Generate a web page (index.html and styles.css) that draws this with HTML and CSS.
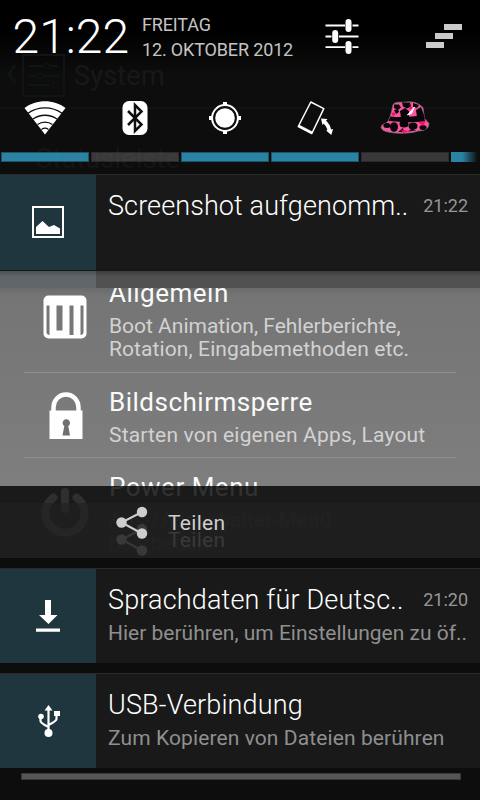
FILE: index.html
```html
<!DOCTYPE html>
<html lang="de">
<head>
<meta charset="utf-8">
<title>Benachrichtigungen</title>
<link rel="stylesheet" href="styles.css">
</head>
<body>
<main class="shade">
  <div class="ghost ghost-header">
    <svg width="66" height="44" viewBox="0 0 66 44" fill="none" stroke="currentColor"><path d="M15 11 9 20l6 9" stroke-width="3"/><path d="M23 1h41v41H23zM29 12h14m7 0h8M29 22h7m7 0h15M29 31h20" stroke-width="2"/><circle cx="47" cy="12" r="3"/><circle cx="40" cy="22" r="3"/><circle cx="55" cy="31" r="3"/></svg>
    <span class="ghost-title">System</span>
  </div>
  <span class="ghost ghost-status">Statusleiste</span>
  <i class="ghost-line"></i>
  <header class="top">
    <div class="clock">21:22</div>
    <div class="date"><div class="day">FREITAG</div><div class="full">12. OKTOBER 2012</div></div>
    <svg class="sliders" width="36" height="36" viewBox="0 0 36 36"><g stroke="#fff" stroke-width="1.8"><path d="M1.5 7.500H21M28.500 7.500h6M1.500 18.500h6M15 18.500h19.500M1.500 29.200H21M28.500 29.200h6"/></g><g fill="#fff"><rect x="21.500" y="1" width="6" height="13" rx="3"/><rect x="8.200" y="12" width="6" height="13" rx="3"/><rect x="21.500" y="23" width="6" height="13" rx="3"/></g></svg>
    <svg class="clear" width="36" height="24" viewBox="0 0 36 24" fill="#cacaca"><path d="M18 0h18v6H18zM9 9h18v6H9zM0 18h18v6H0z"/></svg>
  </header>
  <nav class="toggles">
    <div class="toggle on"><svg viewBox="0 0 48 40"><path d="M3.500 8C15-1 33-1 44.500 8L24 34.500z" fill="#fff"/><path d="M7 13.200c10-7.200 24-7.200 34 0M12 19c7-5 17-5 24 0M16.500 24.500c4.500-3.200 10.500-3.200 15 0M20.500 29.500c2-1.500 5-1.500 7 0" fill="none" stroke="#0d0d0d" stroke-width="1.300"/></svg></div>
    <div class="toggle"><svg viewBox="0 0 48 40"><rect x="11.500" y="1" width="25" height="34" rx="6.500" fill="#fff"/><path d="M17 11l13.500 13.500L24 31V5l6.500 6.500L17 25" fill="none" stroke="#101010" stroke-width="2.500"/></svg></div>
    <div class="toggle on"><svg viewBox="0 0 48 40"><circle cx="24" cy="18" r="9.800" fill="#fff"/><circle cx="24" cy="18" r="12.900" fill="none" stroke="#fff" stroke-width="2"/><path d="M22 2h4v4h-4zM22 30h4v4h-4zM8 16h4v4H8zM36 16h4v4h-4z" fill="#fff"/></svg></div>
    <div class="toggle on"><svg viewBox="0 0 48 40"><g transform="translate(6.300 0)"><path d="M13.500 2 26.500 8.700 14.500 33.500 1 26.500z" fill="none" stroke="#fff" stroke-width="1.500" stroke-linejoin="round"/><path d="M1 26.500 14.500 33.500l.8-1.500L1.800 25z" fill="#fff" stroke="#fff" stroke-width=".6"/></g><path d="M33 21.500Q37.500 25 38.500 31" fill="none" stroke="#fff" stroke-width="3.800"/><path d="M30 18.500l6.500.5-5 6zM40.300 35l-5.200-4.600 7-1.400z" fill="#fff"/></svg></div>
    <div class="toggle"><svg viewBox="0 0 48 40"><path d="M12 5Q13 1.500 22 2.300 35 0 42 7.500L43.500 18.500 48 23.500Q48 31 37 31 29 34 14 33 1 32 0 27.500 0 24.500 6 22.500 9 20 12 5z" fill="#f8579f" stroke="#777" stroke-width=".7"/><g fill="#090509"><path d="M9.500 16.500Q25 18 43 15l1 6.500Q25 23 7.500 21z"/><path d="M13 4.500h5l2 3-3 2.500-4-2zM21 2.500h8l1 4-4 2-4-2zM32 3l6 2-2 3-4-1zM13 10l4-1 1 3-3 2zM19 11l5-3 4 3v6l-8 1zM35 10l5-3 3 8-7 2z"/><ellipse cx="6" cy="25.500" rx="3.600" ry="2.500"/><ellipse cx="13" cy="27" rx="4" ry="4.800"/><ellipse cx="23" cy="24" rx="4.500" ry="3.500"/><ellipse cx="32" cy="26" rx="4.500" ry="3.500"/><ellipse cx="42" cy="27.500" rx="3.500" ry="2.500"/><path d="M17 32l5-4 1 4zM27 31.500l8-1-4-2z"/></g><g fill="#ff0874"><circle cx="12.500" cy="14" r="1.700"/><circle cx="29.500" cy="8" r="1.500"/><path d="M37 22l8-1-3 5zM20 30l9 1-7 2z"/></g><path d="M33.500 7 26.500 15l4-1.500z" fill="#fff" stroke="#fff"/></svg></div>
    <div class="toggle on partial"></div>
  </nav>

  <section class="card first">
    <div class="icon"><svg width="32" height="32" viewBox="0 0 32 32"><path d="M1 1h30v30H1z" fill="none" stroke="#fff" stroke-width="2"/><path d="M4 28v-7l6.500-6 6.500 6 5-2 6 3.500V28z" fill="#fff"/></svg></div>
    <div class="content"><div class="row"><div class="title t1">Screenshot aufgenomm..</div><time>21:22</time></div></div>
  </section>
  <div class="strip"><i></i></div>
  <section class="preview">
    <article class="setting general">
      <svg width="44" height="44" viewBox="0 0 44 44"><rect x=".5" y=".5" width="43" height="43" rx="5" fill="#fff"/><path d="M3.500 10.500h3V40q-3-.5-3-3zM13.500 10.500h6v25h-6zM26.500 10.500h4V40h-4zM37.500 10.500h3V37q0 2.500-3 3z" fill="#777"/></svg>
      <div><h2 class="h1">Allgemein</h2><p class="p1">Boot Animation, Fehlerberichte,</p><p class="p2">Rotation, Eingabemethoden etc.</p></div>
    </article>
    <article class="setting lock">
      <svg width="44" height="48" viewBox="0 0 44 48"><path d="M9.500 21V15.500a12.500 13 0 0 1 25 0V21" fill="none" stroke="#fff" stroke-width="4.500"/><path d="M5.500 18.500h33V47h-33z" fill="#fff"/><path d="M18.500 43.500l1.800-9.500a3.700 3.700 0 1 1 4 0l1.700 9.500z" fill="#707070"/></svg>
      <div><h2 class="h2">Bildschirmsperre</h2><p class="p3">Starten von eigenen Apps, Layout</p></div>
    </article>
    <article class="setting power">
      <svg width="48" height="50" viewBox="0 0 48 50" fill="none" stroke="#e6e6e6" stroke-width="8" stroke-linecap="round"><path d="M12.500 10.500a19.500 19.500 0 1 0 23 0M24 5v17"/></svg>
      <div><h2 class="h3">Power Menu</h2><p class="p4">Aus-/Ausschalter-Menü</p><p>bearbeiten</p></div>
    </article>
  </section>
  <section class="share">
    <svg width="32" height="33" viewBox="0 0 32 33"><path d="M26 6 5.500 16.500 26 27.500" fill="none" stroke="currentColor" stroke-width="2"/><g fill="currentColor"><circle cx="26" cy="6" r="5.200"/><circle cx="5.500" cy="16.500" r="5.200"/><circle cx="26" cy="27.500" r="5.200"/></g></svg>
    <span>Teilen</span>
    <div class="share-echo"><svg width="32" height="33" viewBox="0 0 32 33"><path d="M26 6 5.500 16.500 26 27.500" fill="none" stroke="currentColor" stroke-width="2"/><g fill="currentColor"><circle cx="26" cy="6" r="5.200"/><circle cx="5.500" cy="16.500" r="5.200"/><circle cx="26" cy="27.500" r="5.200"/></g></svg><span>Teilen</span></div>
  </section>

  <section class="card">
    <div class="icon"><svg width="32" height="32" viewBox="0 0 32 32" fill="#fff"><path d="M13 0h6v15h6.500l-9 9-9.500-9h6zM4 28.500h24v3.300H4z"/></svg></div>
    <div class="content"><div class="row"><div class="title t2">Sprachdaten für Deutsc..</div><time>21:20</time></div><div class="sub s2">Hier berühren, um Einstellungen zu öf..</div></div>
  </section>
  <section class="card">
    <div class="icon"><svg width="32" height="32" viewBox="0 0 32 32"><path d="M16.500 4v22M8.500 12v4q0 2 8 6M24.500 9v5q0 2-8 6" fill="none" stroke="#fff" stroke-width="2.200"/><g fill="#fff"><path d="M16.500 0l4 5.500h-8zM22 6h6v5h-6z"/><circle cx="9" cy="11.500" r="2.800"/><circle cx="16.500" cy="28" r="4"/></g></svg></div>
    <div class="content"><div class="row"><div class="title t3">USB-Verbindung</div></div><div class="sub s3">Zum Kopieren von Dateien berühren</div></div>
  </section>
  <footer><i></i></footer>
</main>
</body>
</html>
```
FILE: styles.css
```css
*, *::after { box-sizing: border-box; }
body { margin: 0; background: #000; font-family: Roboto, "Liberation Sans", sans-serif; }
h2, p { margin: 0; font-weight: 400; }
svg { display: block; overflow: visible; flex: none; }
.shade { position: relative; width: 480px; height: 800px; overflow: hidden; background: linear-gradient(#000 0, #000 30px, #0d0d0d 75px, #0d0d0d 100%); white-space: nowrap; }
.ghost { position: absolute; color: #171819; }
.ghost-header { left: 0; top: 54px; display: flex; align-items: center; }
.ghost-header svg { color: #0f1416; }
.ghost-title { margin-left: 8px; font-size: 27px; letter-spacing: .2px; }
.ghost-status { left: 36px; top: 144px; font-size: 27px; line-height: 30px; letter-spacing: .2px; color: rgba(128,128,128,.08); z-index: 1; }
.ghost-line { position: absolute; top: 107px; left: 0; width: 100%; height: 2px; background: #0e1316; }

.top { position: relative; height: 96px; display: flex; align-items: flex-start; }
.clock { margin-left: 12.500px; width: 129.500px; color: #fff; font-size: 48px; line-height: 56px; font-weight: 300; margin-top: 9px; }
.date { width: 182px; padding-top: 13px; color: #c4c4c4; font-size: 18px; line-height: 24.500px; letter-spacing: -.15px; }
.sliders { margin-top: 18px; }
.clear { margin: 24px 0 0 66px; }

.toggles { position: relative; height: 78px; display: grid; grid-template-columns: repeat(5, 90px) 30px; }
.toggle { display: flex; flex-direction: column; align-items: center; justify-content: space-between; padding: 4px 0 0; height: 66px; }
.toggle svg { width: 48px; height: 40px; }
.toggle::after { content: ""; height: 10px; width: 88px; background: #393939; border: 1px solid #2a2a2a; }
.toggle.on::after { background: #2a83a5; border-color: #1c5368; }
.toggle.partial::after { margin-top: auto; width: 28px; background: linear-gradient(90deg, #2a83a5 40%, #0d0d0d 95%); border: 0; }

.card { position: relative; display: grid; grid-template-columns: 96px 1fr; height: 95px; margin-bottom: 10px; background: #191919; border-top: 1px solid #2b2b2b; }
.card.first { height: 97px; margin-bottom: 0; border-bottom: 1px solid #171717; }
.icon { background: #1f363f; display: grid; place-items: center; }
.first .icon { padding-bottom: 1px; }
.content { padding: 14px 12px 0; }
.row { display: flex; justify-content: space-between; height: 34px; }
.title { color: #fff; font-size: 27px; line-height: 34px; font-weight: 300; }
.t1 { letter-spacing: .1px; }
.t2 { letter-spacing: .17px; }
.t3 { letter-spacing: .15px; }
time { color: #969696; font-size: 18px; line-height: 34px; }
.sub { color: #8f8f8f; font-size: 21px; line-height: 32px; }
.s3 { letter-spacing: .1px; }

.strip { height: 17px; background: linear-gradient(#3d3d3d, #515151 6px); }
.strip i { display: block; width: 96px; height: 17px; background: linear-gradient(#4c5154, #60676b 6px); }
.preview { height: 198px; overflow: visible; color: #fafafa; background: linear-gradient(#6b6b6b 0, #757575 8px, #7e7e7e 100%); padding: 0 24px; }
.setting { display: grid; grid-template-columns: 85px 1fr; height: 85px; border-bottom: 1px solid #919191; }
.setting h2 { font-size: 26px; line-height: 32px; color: #fafafa; letter-spacing: .5px; }
.setting p { font-size: 21px; line-height: 23px; color: #d2d2d2; letter-spacing: .1px; }
.setting .p1 { letter-spacing: 0; }
.setting .p3 { letter-spacing: .17px; }
.general svg { margin: 7px 0 0 19px; }
.general > div { overflow: hidden; }
.general h2 { margin-top: -11px; margin-bottom: 5.500px; }
.lock svg { margin: 19px 0 0 20px; }
.lock h2 { margin-top: 13px; margin-bottom: 6px; }
.power { border: 0; }
.power svg { margin: 29px 0 0 17px; }
.power h2 { margin-top: 13px; margin-bottom: 6px; }
.power p { color: #777; }

.share { position: relative; z-index: 0; height: 72px; margin-bottom: 10px; padding: 0 116px; display: flex; color: #cecece; background: linear-gradient(rgba(27,27,27,.9) 17px, rgba(31,31,31,.97) 17px); }
.share svg { margin-top: 20px; }
.share span { margin-left: 20px; padding-top: 21px; font-size: 21px; line-height: 32px; letter-spacing: .3px; }
.share-echo { position: absolute; left: 116px; top: 17px; display: flex; color: #393939; z-index: -1; }

footer { position: relative; margin-top: -10px; height: 32px; padding: 5px 20px; background: #0d0d0d; }
footer i { display: block; width: 440px; margin-left: 1px; height: 7px; background: #555; border: 1px solid #393939; }
```
